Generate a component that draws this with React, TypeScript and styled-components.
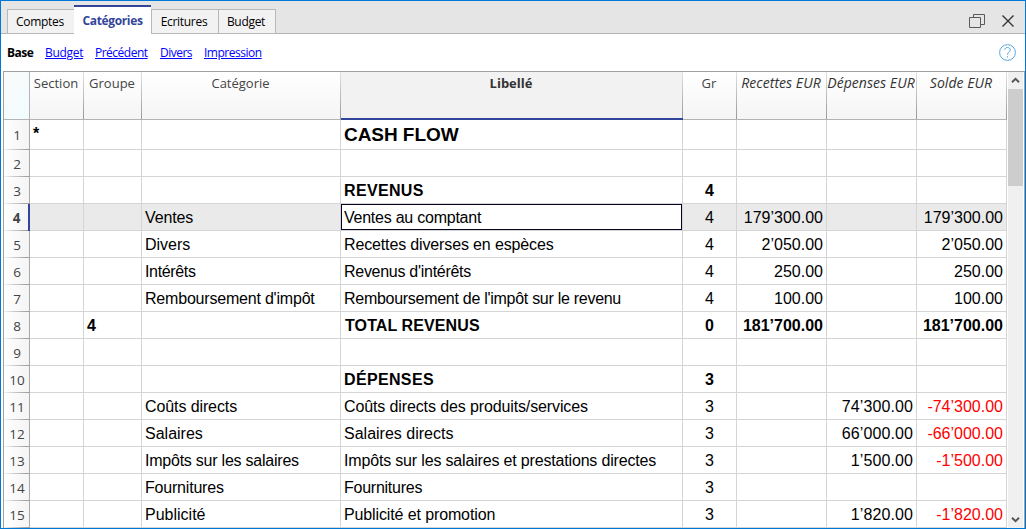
import React from 'react';
import styled, { createGlobalStyle, css } from 'styled-components';

const GlobalStyle = createGlobalStyle`
  * { box-sizing: border-box; }
  html, body { margin: 0; padding: 0; background: #fff; overflow: hidden; }
`;

const uiFont = "'Open Sans', 'Noto Sans', sans-serif";
const gridFont = "'Liberation Sans', Arial, sans-serif";
const accent = '#33459a';

const Window = styled.div`
  display: flex;
  flex-direction: column;
  width: 1026px;
  height: 529px;
  border: 1px solid #0078d7;
  background: #fff;
  font-family: ${uiFont};
  overflow: hidden;
`;

const TabBar = styled.div`
  display: flex;
  align-items: flex-end;
  flex: none;
  height: 33px;
  padding-left: 6px;
  background: #e5e5e5;
  box-shadow: inset 0 -1px #b4b4b4;
`;

const Tab = styled.div<{ $width: number; $active?: boolean; $last?: boolean }>`
  width: ${p => p.$width}px;
  height: 25px;
  padding: 1px 2px 0 0;
  border: 1px solid #b8b8b8;
  border-right-width: ${p => (p.$last ? 1 : 0)}px;
  background: #f2f2f2;
  color: #000;
  font-size: 12px;
  line-height: 22px;
  text-align: center;
  white-space: nowrap;
  ${p =>
    p.$active &&
    css`
      height: 29px;
      padding: 0;
      border: 0;
      border-top: 2px solid ${accent};
      background: #fff;
      color: ${accent};
      font-weight: 700;
      line-height: 27px;
    `}
`;

const Label = styled.span<{ $spacing?: number }>`
  letter-spacing: ${p => p.$spacing ?? 0}px;
`;

const WindowButtons = styled.div`
  display: flex;
  gap: 16px;
  margin-left: auto;
  padding: 0 10px 5px 0;
  svg { display: block; }
`;

const ViewBar = styled.div`
  display: flex;
  align-items: center;
  flex: none;
  height: 37px;
  padding: 0 9px 0 6px;
  font-size: 12px;
`;

const ViewLink = styled.span<{ $width: number; $current?: boolean }>`
  width: ${p => p.$width}px;
  margin-right: 12px;
  white-space: nowrap;
  color: ${p => (p.$current ? '#000' : '#0000ff')};
  font-weight: ${p => (p.$current ? 700 : 400)};
  text-decoration: ${p => (p.$current ? 'none' : 'underline')};
`;

const HelpIcon = styled.svg`
  margin-left: auto;
`;

const TableFrame = styled.div`
  display: flex;
  flex: none;
  width: 1022px;
  height: 457px;
  margin-left: 2px;
  border: solid #a0a0a0;
  border-width: 1px 1px 0 1px;
`;

const Grid = styled.div`
  width: 1003px;
  flex: none;
`;

const Row = styled.div<{ $height?: number; $selected?: boolean }>`
  display: grid;
  grid-template-columns: 26px 54px 58px 199px 342px 54px 90px 90px 90px;
  height: ${p => p.$height ?? 27}px;
  background: ${p => (p.$selected ? '#eaeaea' : '#fff')};
`;

const HeadCell = styled.div<{ $active?: boolean; $italic?: boolean; $corner?: boolean }>`
  display: flex;
  justify-content: center;
  padding: 1px 2px 0 0;
  border-bottom: 1px solid #b4b4b4;
  background:
    linear-gradient(#e2e2e2, #989898) right / 1px 100% no-repeat,
    linear-gradient(#fff, #f5f5f5);
  color: #444;
  font-size: 13px;
  line-height: 20px;
  white-space: nowrap;
  ${p => p.$corner && css`background: linear-gradient(#b4b4b4, #b4b4b4) right / 1px 100% no-repeat, linear-gradient(135deg, #fafafa, #f1fcff);`}
  ${p => p.$italic && css`padding-right: 2px; font-style: italic; font-size: 14px; letter-spacing: 0.05px; color: #333;`}
  ${p =>
    p.$active &&
    css`
      border-bottom: 2px solid ${accent};
      background: linear-gradient(#e2e2e2, #989898) right / 1px 100% no-repeat, #f2f2f2;
      color: #333;
      font-weight: 700;
    `}
`;

const RowNumber = styled.div<{ $selected?: boolean }>`
  display: flex;
  align-items: center;
  justify-content: center;
  padding-left: 1px;
  border-right: ${p => (p.$selected ? `2px solid ${accent}` : '1px solid #a8a8a8')};
  background:
    linear-gradient(90deg, #f0f0f0, #999) bottom / 100% 1px no-repeat,
    linear-gradient(90deg, #fff, #f4f4f4);
  color: #444;
  font-size: 13.5px;
  line-height: 20px;
  font-weight: ${p => (p.$selected ? 700 : 400)};
`;

const Cell = styled.div<{
  $align?: 'left' | 'center' | 'right';
  $bold?: boolean;
  $title?: boolean;
  $total?: boolean;
  $negative?: boolean;
}>`
  display: flex;
  align-items: center;
  justify-content: ${p => (p.$align === 'right' ? 'flex-end' : p.$align === 'center' ? 'center' : 'flex-start')};
  padding: ${p => (p.$title ? '1px 3px 0' : p.$total ? '2px 3px 0 4px' : '2px 3px 0')};
  border: solid #d4d4d4;
  border-width: 0 1px 1px 0;
  color: ${p => (p.$negative ? '#ff0000' : '#000')};
  font-family: ${gridFont};
  font-size: ${p => (p.$title ? 19 : 16)}px;
  font-weight: ${p => (p.$bold ? 700 : 400)};
  line-height: 20px;
  white-space: nowrap;
`;

const SectionCell = styled(Cell)`
  padding-top: 0;
  padding-bottom: 2px;
`;

const FocusCell = styled(Cell)`
  position: relative;
  background: #fff;
  &::after {
    content: '';
    position: absolute;
    inset: 0;
    border: 1px solid #050523;
  }
`;

const ScrollBar = styled.div`
  display: flex;
  flex-direction: column;
  width: 15px;
  height: 456px;
  margin-left: 1px;
  background: #f0f0f0;
`;

const ScrollArrow = styled.div`
  display: flex;
  align-items: center;
  justify-content: center;
  height: 17px;
`;

const ScrollThumb = styled.div`
  height: 97px;
  margin-bottom: auto;
  background: #cdcdcd;
`;

interface Entry {
  section?: string;
  group?: string;
  category?: string;
  categorySpacing?: number;
  label?: string;
  labelSpacing?: number;
  gr?: string;
  income?: string;
  expense?: string;
  balance?: string;
  bold?: boolean;
  total?: boolean;
}

const entries: Entry[] = [
  { section: '*', label: 'CASH FLOW', labelSpacing: -0.05, bold: true },
  {},
  { label: 'REVENUS', labelSpacing: 0.35, gr: '4', bold: true },
  { category: 'Ventes', categorySpacing: -0.15, label: 'Ventes au comptant', labelSpacing: -0.24, gr: '4', income: '179’300.00', balance: '179’300.00' },
  { category: 'Divers', label: 'Recettes diverses en espèces', labelSpacing: -0.14, gr: '4', income: '2’050.00', balance: '2’050.00' },
  { category: 'Intérêts', categorySpacing: -0.35, label: "Revenus d'intérêts", labelSpacing: -0.28, gr: '4', income: '250.00', balance: '250.00' },
  { category: "Remboursement d'impôt", categorySpacing: -0.2, label: "Remboursement de l'impôt sur le revenu", labelSpacing: -0.28, gr: '4', income: '100.00', balance: '100.00' },
  { group: '4', label: 'TOTAL REVENUS', labelSpacing: 0.1, gr: '0', income: '181’700.00', balance: '181’700.00', bold: true, total: true },
  {},
  { label: 'DÉPENSES', labelSpacing: 0.35, gr: '3', bold: true },
  { category: 'Coûts directs', categorySpacing: -0.1, label: 'Coûts directs des produits/services', labelSpacing: -0.12, gr: '3', expense: '74’300.00', balance: '-74’300.00' },
  { category: 'Salaires', label: 'Salaires directs', gr: '3', expense: '66’000.00', balance: '-66’000.00' },
  { category: 'Impôts sur les salaires', categorySpacing: -0.23, label: 'Impôts sur les salaires et prestations directes', labelSpacing: -0.17, gr: '3', expense: '1’500.00', balance: '-1’500.00' },
  { category: 'Fournitures', categorySpacing: -0.2, label: 'Fournitures', labelSpacing: -0.25, gr: '3' },
  { category: 'Publicité', label: 'Publicité et promotion', labelSpacing: -0.12, gr: '3', expense: '1’820.00', balance: '-1’820.00' },
];

const SELECTED = 3;

function EntryRow({ entry, index }: { entry: Entry; index: number }) {
  const selected = index === SELECTED;
  const LabelCell = selected ? FocusCell : Cell;
  const b = entry.bold;
  return (
    <Row $height={index === 0 ? 30 : 27} $selected={selected}>
      <RowNumber $selected={selected}>{index + 1}</RowNumber>
      <SectionCell $bold={b}>{entry.section}</SectionCell>
      <Cell $bold={b}>{entry.group}</Cell>
      <Cell><Label $spacing={entry.categorySpacing}>{entry.category}</Label></Cell>
      <LabelCell $bold={b} $title={index === 0} $total={entry.total}>
        <Label $spacing={entry.labelSpacing}>{entry.label}</Label>
      </LabelCell>
      <Cell $align="center" $bold={b}>{entry.gr}</Cell>
      <Cell $align="right" $bold={b}>{entry.income}</Cell>
      <Cell $align="right" $bold={b}><Label $spacing={0.1}>{entry.expense}</Label></Cell>
      <Cell $align="right" $bold={b} $negative={entry.balance?.startsWith('-')}>{entry.balance}</Cell>
    </Row>
  );
}

export default function App() {
  return (
    <>
      <GlobalStyle />
      <Window>
        <TabBar>
          <Tab $width={67}><Label $spacing={-0.3}>Comptes</Label></Tab>
          <Tab $width={77} $active><Label $spacing={-0.35}>Catégories</Label></Tab>
          <Tab $width={67}><Label $spacing={-0.3}>Ecritures</Label></Tab>
          <Tab $width={58} $last><Label $spacing={-0.3}>Budget</Label></Tab>
          <WindowButtons>
            <svg width="16" height="16" viewBox="0 0 16 16" fill="none" stroke="#5a5a5a">
              <path d="M0.5 4.5h11v10h-11zM4.5 4.5v-3h11v10h-4" />
            </svg>
            <svg width="14" height="16" viewBox="0 0 14 16" fill="none" stroke="#333" strokeWidth="1.4">
              <path d="M1.5 2.5l11 11M12.5 2.5l-11 11" />
            </svg>
          </WindowButtons>
        </TabBar>
        <ViewBar>
          <ViewLink $width={26} $current><Label $spacing={-0.5}>Base</Label></ViewLink>
          <ViewLink $width={38}><Label $spacing={-0.3}>Budget</Label></ViewLink>
          <ViewLink $width={53}><Label $spacing={-0.5}>Précédent</Label></ViewLink>
          <ViewLink $width={32}><Label $spacing={-0.5}>Divers</Label></ViewLink>
          <ViewLink $width={58}><Label $spacing={-0.48}>Impression</Label></ViewLink>
          <HelpIcon width="17" height="17" viewBox="0 0 17 17" fill="none" stroke="#55a7dc">
            <circle cx="8.5" cy="8.5" r="7.9" />
            <path d="M5.7 5.9C5.7 2.7 11.3 2.7 11.3 5.9C11.3 8 8.5 8.2 8.5 10.8" />
            <path d="M8.5 12.2v1.3" />
          </HelpIcon>
        </ViewBar>
        <TableFrame>
          <Grid>
            <Row $height={48}>
              <HeadCell $corner />
              <HeadCell>Section</HeadCell>
              <HeadCell>Groupe</HeadCell>
              <HeadCell>Catégorie</HeadCell>
              <HeadCell $active>Libellé</HeadCell>
              <HeadCell>Gr</HeadCell>
              <HeadCell $italic>Recettes EUR</HeadCell>
              <HeadCell $italic>Dépenses EUR</HeadCell>
              <HeadCell $italic>Solde EUR</HeadCell>
            </Row>
            {entries.map((entry, i) => <EntryRow key={i} entry={entry} index={i} />)}
          </Grid>
          <ScrollBar>
            <ScrollArrow>
              <svg width="9" height="7" viewBox="0 0 9 7" fill="none" stroke="#555" strokeWidth="2"><path d="M1 5.2L4.5 1.8L8 5.2" /></svg>
            </ScrollArrow>
            <ScrollThumb />
            <ScrollArrow>
              <svg width="9" height="7" viewBox="0 0 9 7" fill="none" stroke="#555" strokeWidth="2"><path d="M1 1.8L4.5 5.2L8 1.8" /></svg>
            </ScrollArrow>
          </ScrollBar>
        </TableFrame>
      </Window>
    </>
  );
}
